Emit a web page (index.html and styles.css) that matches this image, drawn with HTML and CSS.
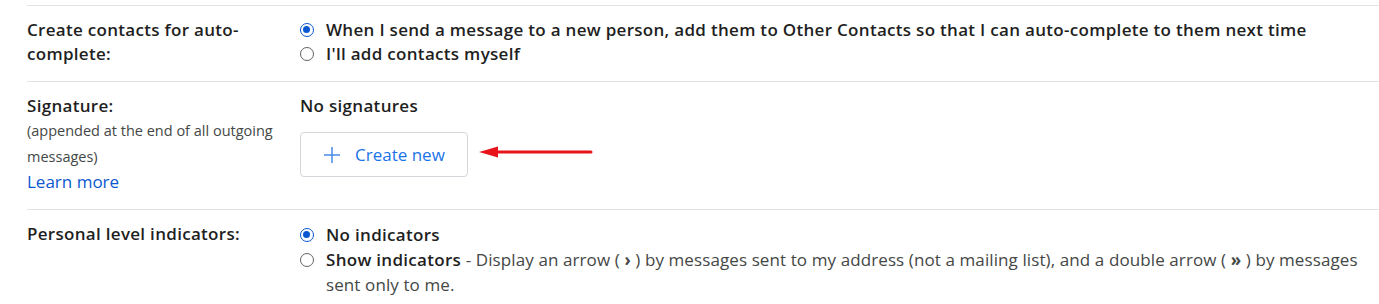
FILE: index.html
```html
<!DOCTYPE html>
<html>
<head>
<meta charset="utf-8">
<link rel="stylesheet" href="styles.css">
</head>
<body>
<div class="settings">
  <div class="row row-contacts">
    <div class="label">Create contacts for auto-<br>complete:</div>
    <div class="content">
      <label class="option"><span class="radio checked"></span><span class="opt-title">When I send a message to a new person, add them to Other Contacts so that I can auto-complete to them next time</span></label>
      <label class="option"><span class="radio"></span><span class="opt-title">I'll add contacts myself</span></label>
    </div>
  </div>
  <div class="row row-signature">
    <div class="label">
      <div>Signature:</div>
      <div class="sub">(appended at the end of all outgoing messages)</div>
      <a class="link" href="#">Learn more</a>
    </div>
    <div class="content">
      <div class="opt-title">No signatures</div>
      <div class="btn-line">
        <button class="create-btn"><svg class="plus" width="18" height="18" viewBox="0 0 18 18"><path d="M9 1V17M1 9H17" stroke="#4a8ae8" stroke-width="1.5" fill="none"/></svg><span>Create new</span></button>
        <svg class="arrow" width="114" height="12" viewBox="0 0 114 12"><path d="M0 6L19 0.5V11.5Z" fill="#e8141b"/><path d="M17 6H112" stroke="#e8141b" stroke-width="3" stroke-linecap="round"/></svg>
      </div>
    </div>
  </div>
  <div class="row row-indicators">
    <div class="label">Personal level indicators:</div>
    <div class="content tall">
      <label class="option"><span class="radio checked"></span><span class="opt-title">No indicators</span></label>
      <label class="option"><span class="radio"></span><span class="opt-text"><b class="opt-title">Show indicators</b> - Display an arrow ( <b class="glyph">›</b> ) by messages sent to my address (not a mailing list), and a double arrow ( <b class="glyph">»</b> ) by messages sent only to me.</span></label>
    </div>
  </div>
</div>
</body>
</html>
```
FILE: styles.css
```css
html, body {
  margin: 0;
  padding: 0;
  background: #ffffff;
}
body {
  font-family: "Open Sans", Roboto, sans-serif;
  font-size: 17px;
  color: #1f1f1f;
}
.settings {
  padding: 5px 0 0 27px;
}
.row {
  display: grid;
  grid-template-columns: 273px 1fr;
  border-top: 1px solid #e3e3e3;
  padding: 12px 14px 15px 0;
}
.label {
  font-weight: 600;
  line-height: 24px;
  letter-spacing: 0.3px;
  color: #1f1f1f;
}
.sub {
  font-weight: 400;
  font-size: 14.5px;
  line-height: 26px;
  letter-spacing: 0;
  color: #444746;
}
.link {
  display: block;
  font-weight: 400;
  font-size: 17px;
  letter-spacing: 0;
  color: #0b57d0;
  text-decoration: none;
  line-height: 24px;
}
.content {
  line-height: 24px;
}
.content.tall {
  line-height: 25px;
}
.option {
  display: flex;
  align-items: flex-start;
  gap: 12px;
}
.radio {
  flex: none;
  box-sizing: border-box;
  width: 14px;
  height: 14px;
  border-radius: 50%;
  border: 1px solid #5f6368;
  margin-top: 5px;
  position: relative;
}
.tall .radio {
  margin-top: 6px;
}
.radio.checked {
  border: 1.5px solid #0b57d0;
}
.radio.checked::after {
  content: "";
  position: absolute;
  left: 2px;
  top: 2px;
  width: 7px;
  height: 7px;
  border-radius: 50%;
  background: #0b57d0;
}
.opt-title {
  font-weight: 600;
  letter-spacing: 0.3px;
}
.opt-text {
  color: #444746;
  letter-spacing: 0.1px;
}
.opt-text .opt-title {
  color: #1f1f1f;
}
.glyph {
  font-weight: 700;
}
.btn-line {
  display: flex;
  align-items: center;
  gap: 11px;
  margin-top: 14px;
}
.create-btn {
  display: flex;
  align-items: center;
  gap: 14px;
  height: 45px;
  width: 168px;
  box-sizing: border-box;
  padding: 0 0 0 22px;
  border: 1px solid #d3d6da;
  border-radius: 4px;
  background: #fff;
  font-family: "Open Sans", Roboto, sans-serif;
  font-size: 17px;
  color: #1a73e8;
}
.arrow {
  display: block;
  margin-bottom: 6px;
}
```
